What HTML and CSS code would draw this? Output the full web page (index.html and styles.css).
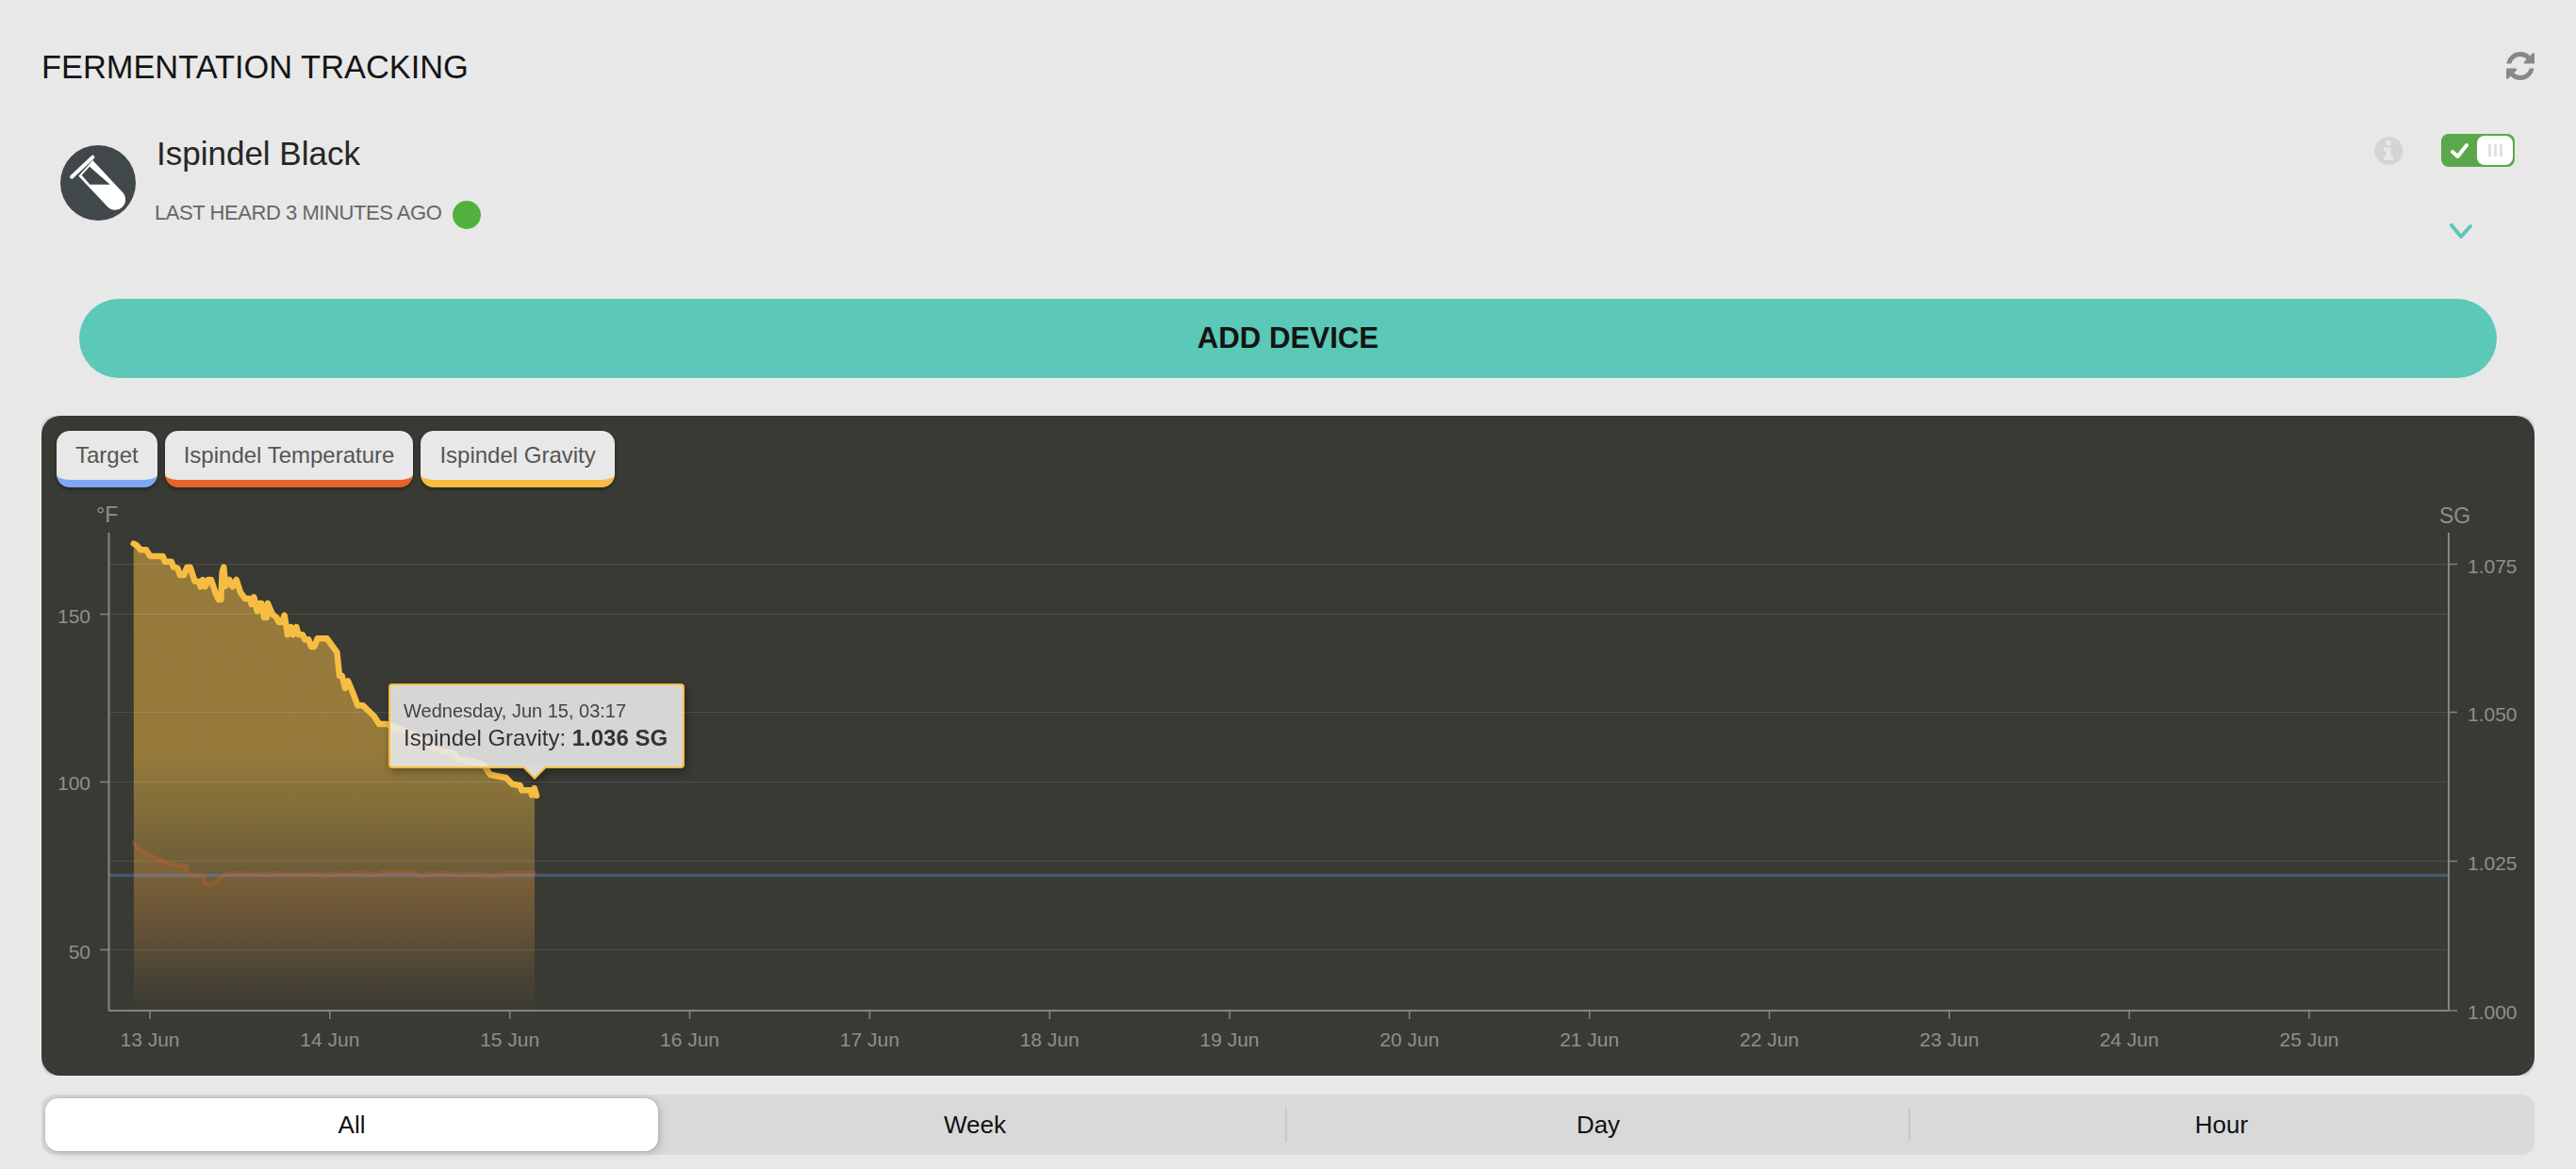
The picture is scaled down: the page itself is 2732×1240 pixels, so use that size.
FILE: index.html
```html
<!DOCTYPE html>
<html lang="en">
<head>
<meta charset="utf-8">
<title>Fermentation Tracking</title>
<link rel="stylesheet" href="styles.css">
</head>
<body>
<main class="page">
  <header class="header">
    <h1 class="title">FERMENTATION TRACKING</h1>
    <svg class="refresh" viewBox="128 128 1536 1536"><path d="M1639 1056q0 5-1 7-64 268-268 434.500t-478 166.500q-146 0-282.500-55t-243.500-157l-129 129q-19 19-45 19t-45-19-19-45v-448q0-26 19-45t45-19h448q26 0 45 19t19 45-19 45l-137 137q71 66 161 102t187 36q134 0 250-65t186-179q11-17 53-117 8-23 30-23h192q13 0 22.500 9.500t9.500 22.500zm25-800v448q0 26-19 45t-45 19h-448q-26 0-45-19t-19-45 19-45l138-138q-148-137-349-137-134 0-250 65t-186 179q-11 17-53 117-8 23-30 23h-199q-13 0-22.500-9.500t-9.500-22.500v-7q65-268 270-434.500t480-166.500q146 0 284 55.500t245 156.500l130-129q19-19 45-19t45 19 19 45z"/></svg>
  </header>

  <section class="device">
    <div class="device-main">
      <svg class="avatar" viewBox="0 0 80 80">
        <circle class="avatar-bg" cx="40" cy="40" r="40"/>
        <path class="tube" d="M19.300 32.700L50 65.300A11 11 0 0 0 66 50L34.300 16Z"/>
        <path class="tube-glass" d="M22.700 31.700L31 22.700L52.700 41.700H31.300Z"/>
        <path class="tube-rim" d="M12 33.700L34.300 12.700"/>
      </svg>
      <div class="device-text">
        <div class="device-name">Ispindel Black</div>
        <div class="device-status">
          <span class="status-text">LAST HEARD 3 MINUTES AGO</span>
          <span class="status-dot"></span>
        </div>
      </div>
    </div>
    <div class="device-side">
      <div class="device-controls">
        <svg class="info" viewBox="0 0 31 30">
          <circle class="info-bg" cx="15.500" cy="15" r="15"/>
          <path class="info-mark" d="M12.300 4.300h5.400v5h-5.400zM10 11.500h7.700v9.500H20v4H10v-4h2.300v-5.500H10z"/>
        </svg>
        <div class="toggle">
          <svg class="toggle-check" viewBox="0 0 20 18"><path d="M2 10l5.500 5L17 3"/></svg>
          <div class="toggle-knob"><i></i><i></i><i></i></div>
        </div>
      </div>
      <svg class="chevron" viewBox="0 0 24 16"><path d="M2 2l10 12L22 3"/></svg>
    </div>
  </section>

  <button class="add-device">ADD DEVICE</button>

  <div class="chart-wrap">
    <section class="chart">
      <div class="legend">
        <span class="legend-tab legend-target">Target</span>
        <span class="legend-tab legend-temp">Ispindel Temperature</span>
        <span class="legend-tab legend-gravity">Ispindel Gravity</span>
      </div>
      <svg class="plot" viewBox="44 530 2644 611">
        <defs>
          <linearGradient id="gravityFill" gradientUnits="userSpaceOnUse" x1="0" y1="565" x2="0" y2="1072">
            <stop offset="0" stop-color="#f6bd42" stop-opacity=".49"/>
            <stop offset=".46" stop-color="#f6bd42" stop-opacity=".49"/>
            <stop offset=".71" stop-color="#f6bd42" stop-opacity=".27"/>
            <stop offset="1" stop-color="#f6bd42" stop-opacity="0"/>
          </linearGradient>
          <linearGradient id="tempFill" gradientUnits="userSpaceOnUse" x1="0" y1="895" x2="0" y2="1072">
            <stop offset="0" stop-color="#e8622e" stop-opacity=".16"/>
            <stop offset="1" stop-color="#e8622e" stop-opacity="0"/>
          </linearGradient>
        </defs>

        <polygon fill="url(#tempFill)" points="142,894 150,902 163,909 180,916 198,919 199,928 216,928 218,937 225,937 230,934 237,928 258,926 280,928 303,927 330,927 347,928 370,927 397,928 407,925 437,925 447,929 463,927 490,928 523,929 540,926 567,926 567,1072 142,1072"/>
        <polygon fill="url(#gravityFill)" points="141.700,576.700 145,578.300 149.300,583.300 155,583.300 159.300,590 172.700,590 175,595.700 181.700,595.700 184,601.700 188.300,602.700 191,610 195,610 198.300,601.700 201.700,601.700 206.700,616.700 210.700,616.700 212.700,622.300 215,615 217.700,622.300 220.700,615 224,615 228.300,628.300 231.700,636 234.300,636 235.700,606.700 237.300,601.700 239.300,621.700 243.300,615 246.700,622.300 250.700,615 255,628.300 260,635 265,635 266.700,641 269.300,633.300 272.700,648.300 275,640 277.300,640 280,655 282.700,655 284,640 289,651.700 293.300,655 295.700,660 299,660 301.700,652.700 305,673.300 308.300,665 310.700,673.300 314.300,665 316.700,673.300 321,673.300 323.300,678.300 327.300,678.300 330,686 333.300,686 336.700,677.300 346.700,677.300 357.300,691.700 360,716.700 362.700,716.700 366,730 369,722.300 375,736.700 379.300,748.300 385,748.300 397,760 402,768 410,768 423.300,773.300 436.700,778.300 446.700,785 460,793.300 468.300,797.300 480,798.300 486.700,805 503.300,808.300 513.300,811.700 520,821.700 536.700,825 543.300,831.700 551.700,833.300 553.300,838.300 563.300,838.300 564,843.300 566.700,836 567,844 567,1072 142,1072"/>

        <path class="grid" d="M116 598.500H2597M116 651.500H2597M116 755.500H2597M116 829.500H2597M116 913.500H2597M116 1007.500H2597"/>
        <path class="target-line" d="M116 928.500H2597"/>
        <polyline class="temp-line" points="142,894 150,902 163,909 180,916 198,919 199,928 216,928 218,937 225,937 230,934 237,928 248,926.500 258,926 264,928 270,926 280,928 290,926.500 303,927 315,928 330,927 347,928 358,926.500 370,927 380,925.500 397,928 407,925 437,925 447,929 455,926 463,927 472,926 490,928 505,927 523,929 540,926 567,926"/>
        <polyline class="gravity-line" points="141.700,576.700 145,578.300 149.300,583.300 155,583.300 159.300,590 172.700,590 175,595.700 181.700,595.700 184,601.700 188.300,602.700 191,610 195,610 198.300,601.700 201.700,601.700 206.700,616.700 210.700,616.700 212.700,622.300 215,615 217.700,622.300 220.700,615 224,615 228.300,628.300 231.700,636 234.300,636 235.700,606.700 237.300,601.700 239.300,621.700 243.300,615 246.700,622.300 250.700,615 255,628.300 260,635 265,635 266.700,641 269.300,633.300 272.700,648.300 275,640 277.300,640 280,655 282.700,655 284,640 289,651.700 293.300,655 295.700,660 299,660 301.700,652.700 305,673.300 308.300,665 310.700,673.300 314.300,665 316.700,673.300 321,673.300 323.300,678.300 327.300,678.300 330,686 333.300,686 336.700,677.300 346.700,677.300 357.300,691.700 360,716.700 362.700,716.700 366,730 369,722.300 375,736.700 379.300,748.300 385,748.300 397,760 402,768 410,768 423.300,773.300 436.700,778.300 446.700,785 460,793.300 468.300,797.300 480,798.300 486.700,805 503.300,808.300 513.300,811.700 520,821.700 536.700,825 543.300,831.700 551.700,833.300 553.300,838.300 563.300,838.300 564,843.300 566.700,836 569,844"/>

        <path class="axis" d="M115.500 565V1072M2597 565V1072M115 1072H2597"/>
        <path class="tick" d="M106 651.500H115M106 829.500H115M106 1007.500H115M2597 598.500H2606M2597 755.500H2606M2597 913.500H2606M2597 1072H2606M159 1072V1081M349.800 1072V1081M540.700 1072V1081M731.500 1072V1081M922.300 1072V1081M1113.200 1072V1081M1304 1072V1081M1494.800 1072V1081M1685.700 1072V1081M1876.500 1072V1081M2067.300 1072V1081M2258.200 1072V1081M2449 1072V1081"/>

        <text class="axis-label axis-unit" x="102" y="554">°F</text>
        <text class="axis-label axis-unit" x="2587" y="555">SG</text>
        <text class="axis-label end" x="96" y="661">150</text>
        <text class="axis-label end" x="96" y="838">100</text>
        <text class="axis-label end" x="96" y="1017">50</text>
        <text class="axis-label" x="2617" y="607.500">1.075</text>
        <text class="axis-label" x="2617" y="765">1.050</text>
        <text class="axis-label" x="2617" y="923">1.025</text>
        <text class="axis-label" x="2617" y="1081">1.000</text>
        <text class="axis-label mid" x="159" y="1110">13 Jun</text>
        <text class="axis-label mid" x="349.800" y="1110">14 Jun</text>
        <text class="axis-label mid" x="540.700" y="1110">15 Jun</text>
        <text class="axis-label mid" x="731.500" y="1110">16 Jun</text>
        <text class="axis-label mid" x="922.300" y="1110">17 Jun</text>
        <text class="axis-label mid" x="1113.200" y="1110">18 Jun</text>
        <text class="axis-label mid" x="1304" y="1110">19 Jun</text>
        <text class="axis-label mid" x="1494.800" y="1110">20 Jun</text>
        <text class="axis-label mid" x="1685.700" y="1110">21 Jun</text>
        <text class="axis-label mid" x="1876.500" y="1110">22 Jun</text>
        <text class="axis-label mid" x="2067.300" y="1110">23 Jun</text>
        <text class="axis-label mid" x="2258.200" y="1110">24 Jun</text>
        <text class="axis-label mid" x="2449" y="1110">25 Jun</text>
      </svg>
      <div class="tooltip">
        <div class="tooltip-date">Wednesday, Jun 15, 03:17</div>
        <div class="tooltip-value">Ispindel Gravity: <b>1.036 SG</b></div>
      </div>
    </section>
  </div>

  <nav class="range">
    <span class="range-item range-active">All</span>
    <span class="range-item"><span class="range-label">Week</span></span>
    <span class="range-item range-sep"><span class="range-label">Day</span></span>
    <span class="range-item range-last"><span class="range-label">Hour</span></span>
  </nav>
</main>
</body>
</html>
```

FILE: styles.css
```css
* { box-sizing: border-box; }
html, body { margin: 0; padding: 0; background: #e8e8e8; }
body { font-family: "Liberation Sans", Arial, sans-serif; }
.page { padding: 50px 44px 15px; }

.header { display: flex; justify-content: space-between; align-items: center; height: 40px; }
.title { margin: 2px 0 0; font-size: 34.400px; font-weight: 400; line-height: 40px; color: #141414; }
.refresh { width: 30px; height: 30px; fill: #888; }

.device { display: flex; justify-content: space-between; height: 175px; margin-top: 52px; padding: 0 21px 0 20px; }
.device-main { display: flex; gap: 20px; }
.avatar { width: 80px; height: 80px; margin-top: 12px; flex: none; }
.avatar-bg { fill: #41484a; }
.tube { fill: #fff; }
.tube-glass { fill: #41484a; }
.tube-rim { fill: none; stroke: #fff; stroke-width: 4; stroke-linecap: round; }
.device-text { margin-top: 1px; }
.device-name { margin-left: 2px; font-size: 35px; line-height: 40px; color: #262626; }
.device-status { display: flex; gap: 12px; margin-top: 30px; }
.status-text { font-size: 22px; line-height: 25px; letter-spacing: -.44px; color: #666; }
.status-dot { width: 30px; height: 30px; border-radius: 50%; background: #52b13c; }

.device-side { display: flex; flex-direction: column; align-items: flex-end; }
.device-controls { display: flex; align-items: center; gap: 40px; }
.info { width: 31px; height: 30px; }
.info-bg { fill: #d4d4d4; }
.info-mark { fill: #e8e8e8; }
.toggle { display: flex; align-items: center; justify-content: space-between; width: 78px; height: 35px; padding: 0 2px 0 10px; border-radius: 8px; background: #5aa84c; }
.toggle-check { width: 20px; height: 18px; fill: none; stroke: #fff; stroke-width: 4; stroke-linecap: round; stroke-linejoin: round; }
.toggle-knob { display: flex; align-items: center; justify-content: center; gap: 3px; width: 38px; height: 31px; border-radius: 8px; background: #fff; }
.toggle-knob i { width: 3px; height: 13px; background: #e0e0e0; }
.chevron { width: 24px; height: 16px; margin: 60px 45px 0 0; fill: none; stroke: #5ac8b8; stroke-width: 4; stroke-linecap: round; stroke-linejoin: round; }

.add-device { display: block; width: 2564px; height: 84px; margin: 0 40px; padding: 0; border: 0; border-radius: 42px; background: #5cc8b7; font: 700 31.200px "Liberation Sans", Arial, sans-serif; color: #141414; }

.chart-wrap { margin-top: 40px; border-radius: 14px; background: #d2d2d2; }
.chart { position: relative; height: 700px; padding-top: 16px; border-radius: 20px; background: #393a34; }
.legend { display: flex; gap: 8px; padding-left: 16px; height: 60px; }
.legend-tab { display: flex; align-items: center; height: 60px; padding: 0 20px; border-radius: 14px; border-bottom: 8px solid; background: #e8e8e8; box-shadow: 0 2px 4px rgba(0, 0, 0, .4); font-size: 24px; color: #555; }
.legend-target { border-bottom-color: #7ea6f5; }
.legend-temp { border-bottom-color: #e8622e; }
.legend-gravity { border-bottom-color: #f6bd42; }
.plot { display: block; width: 2644px; height: 611px; margin-top: 13px; }
.grid { fill: none; stroke: rgba(255, 255, 255, .11); stroke-width: 1; }
.target-line { fill: none; stroke: rgba(110, 150, 230, .33); stroke-width: 3.500; }
.temp-line { fill: none; stroke: rgba(232, 98, 46, .24); stroke-width: 5; stroke-linejoin: round; stroke-linecap: round; }
.gravity-line { fill: none; stroke: #f6bd42; stroke-width: 6.500; stroke-linejoin: round; stroke-linecap: round; }
.axis { fill: none; stroke: #85857f; stroke-width: 2; }
.tick { fill: none; stroke: #85857f; stroke-width: 1.500; }
.axis-label { font-size: 21px; fill: #8f8f8b; }
.axis-unit { font-size: 23px; }
.axis-label.end { text-anchor: end; }
.axis-label.mid { text-anchor: middle; }

.tooltip { position: absolute; left: 368px; top: 284px; width: 314px; height: 90px; padding: 12px 0 0 14px; border: 2px solid #f6bd42; border-radius: 4px; background: rgba(248, 248, 248, .84); filter: drop-shadow(2px 3px 4px rgba(0, 0, 0, .4)); color: #333; white-space: nowrap; }
.tooltip::before { content: ""; position: absolute; left: 141px; top: calc(100% + 2px); border: solid transparent; border-width: 12px 12px 0; border-top-color: #f6bd42; }
.tooltip::after { content: ""; position: absolute; left: 142px; top: 100%; border: solid transparent; border-width: 11px 11px 0; border-top-color: #dadada; }
.tooltip-date { font-size: 20px; line-height: 30px; color: #444; }
.tooltip-value { font-size: 24px; line-height: 30px; margin-top: -1px; }

.range { display: grid; grid-template-columns: repeat(4, 1fr); height: 64px; margin-top: 20px; border-radius: 14px; background: #d9d9d9; }
.range-item { display: flex; align-items: center; justify-content: center; font-size: 26px; color: #111; }
.range-label { padding-right: 3px; }
.range-active { margin: 4px 7px 4px 4px; border-radius: 14px; background: #fff; box-shadow: 0 0 4px rgba(0, 0, 0, .2), 4px 3px 8px rgba(0, 0, 0, .1); }
.range-item:nth-child(2), .range-sep { background: linear-gradient(#c8c8c8, #c8c8c8) right 1px center / 2px 36px no-repeat; }
```
